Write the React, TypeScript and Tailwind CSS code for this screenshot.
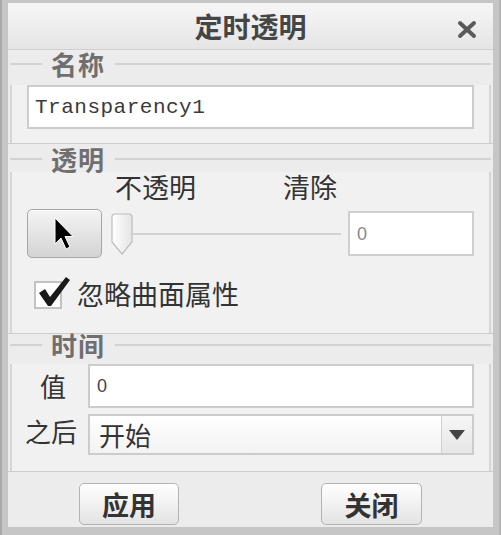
import type { ReactNode } from "react";

const cjk = "font-['Noto_Sans_CJK_SC','Noto_Sans',sans-serif]";

function Legend({ title }: { title: string }) {
  return (
    <div className="flex h-[22px] items-center">
      <div className="h-[2px] w-[32px] bg-[#d3d3d3]" />
      <span className={`${cjk} pl-[9px] pr-[10px] text-[26px] font-bold leading-none tracking-[1px] text-[#6f6f6f]`}>
        {title}
      </span>
      <div className="h-[2px] flex-1 bg-[#d3d3d3]" />
    </div>
  );
}

function Section({ title, top, bottom, children }: { title: string; top: string; bottom: string; children: ReactNode }) {
  return (
    <div className={`border-b border-[#cdcdcd] bg-[#ececec] px-[2px] ${top}`}>
      <Legend title={title} />
      <div className={`border-x-2 border-[#d6d6d6] bg-[#f1f1f1] px-[15px] ${bottom}`}>{children}</div>
    </div>
  );
}

function CursorIcon() {
  return (
    <svg width="24" height="34" viewBox="0 0 24 34">
      <path d="M2 1 L2 27 L8 21 L13 32 L17 30 L12 19.5 L20 19.5 Z" fill="#000" stroke="#fff" strokeWidth="1" />
    </svg>
  );
}

function SliderThumb() {
  return (
    <svg width="22" height="42" viewBox="0 0 22 42">
      <defs>
        <linearGradient id="thumb" x1="0" y1="0" x2="1" y2="0">
          <stop offset="0" stopColor="#ffffff" />
          <stop offset="1" stopColor="#e4e4e4" />
        </linearGradient>
      </defs>
      <path d="M4 1 H18 Q21 1 21 4 V29 L11 41 L1 29 V4 Q1 1 4 1 Z" fill="url(#thumb)" stroke="#bdbdbd" strokeWidth="1.2" />
    </svg>
  );
}

export default function App() {
  return (
    <div className="h-[535px] w-[501px] bg-[#c6c6c6] pb-2 pl-2 pr-2 pt-[3px] shadow-[inset_2px_0_0_#a9a9a9,inset_-2px_0_0_#b4b4b4]">
      <div className="flex h-full flex-col bg-[#e9e9e9]">
        <div className="relative flex h-[47px] items-center justify-center border-b border-[#cfcfcf] bg-gradient-to-b from-[#f6f6f6] to-[#e5e5e5]">
          <span className={`${cjk} text-[28px] font-bold leading-none text-[#454545]`}>定时透明</span>
          <svg className="absolute right-[16px] top-[17px]" width="20" height="19" viewBox="0 0 20 19">
            <path d="M3 3 L17 16 M17 3 L3 16" stroke="#5a5a5a" strokeWidth="4" strokeLinecap="round" />
          </svg>
        </div>

        <Section title="名称" top="pt-[3px]" bottom="pb-[14px]">
          <div className="mt-[10px] flex h-[44px] items-center border-2 border-[#cccccc] bg-white px-[6px]">
            <span className="font-['Liberation_Mono',monospace] text-[21px] leading-none tracking-[0.5px] text-[#3a3a3a]">
              Transparency1
            </span>
          </div>
        </Section>

        <Section title="透明" top="pt-[4px]" bottom="pb-[24px]">
          <div className={`${cjk} mt-[2px] flex h-[28px] items-center text-[27px] leading-none text-[#333]`}>
            <span className="ml-[88px]">不透明</span>
            <span className="ml-[87px]">清除</span>
          </div>
          <div className="mt-[9px] flex h-[49px] items-center">
            <button className="flex h-[49px] w-[75px] items-center justify-center rounded-[5px] border border-[#a6a6a6] bg-gradient-to-b from-[#f4f4f4] to-[#d4d4d4] shadow-[inset_0_1px_0_#ffffff]">
              <CursorIcon />
            </button>
            <div className="ml-[9px] flex h-[49px] w-[230px] items-center">
              <SliderThumb />
              <div className="h-[2px] flex-1 bg-[#d2d2d2]" />
            </div>
            <div className="ml-[7px] flex h-[45px] flex-1 items-center border-2 border-[#cfcfcf] bg-white px-[7px]">
              <span className="font-['Liberation_Sans',sans-serif] text-[18px] leading-none text-[#888]">0</span>
            </div>
          </div>
          <div className="mt-[19px] flex h-[32px] items-end">
            <div className="relative ml-[7px] h-[28px] w-[28px] border-2 border-[#c3c3c3] bg-white">
              <svg className="absolute -top-[8px] left-[0px]" width="36" height="34" viewBox="0 0 36 34">
                <path d="M3 18 L9 14 L14 22 L30 2 L34 5 L15 31 L12 31 Z" fill="#1a1a1a" />
              </svg>
            </div>
            <span className={`${cjk} ml-[15px] text-[27px] leading-[30px] text-[#333]`}>忽略曲面属性</span>
          </div>
        </Section>

        <Section title="时间" top="pt-0" bottom="pb-[16px]">
          <div className="mt-[8px] flex h-[44px] items-center">
            <span className={`${cjk} w-[61px] pl-[13px] text-[26px] leading-none text-[#333]`}>值</span>
            <div className="flex h-[44px] flex-1 items-center border-2 border-[#cccccc] bg-white px-[7px]">
              <span className="font-['Liberation_Sans',sans-serif] text-[18px] leading-none text-[#444]">0</span>
            </div>
          </div>
          <div className="mt-[6px] flex h-[41px] items-center">
            <span className={`${cjk} -ml-[2px] mb-[8px] w-[63px] text-[26px] leading-none text-[#333]`}>之后</span>
            <div className="flex h-[41px] flex-1 border-2 border-[#cccccc] bg-gradient-to-b from-white to-[#f3f3f3]">
              <span className={`${cjk} flex flex-1 items-center pl-[9px] text-[26px] leading-none text-[#333]`}>开始</span>
              <div className="flex w-[31px] items-center justify-center border-l border-[#cfcfcf] bg-gradient-to-b from-[#f6f6f6] to-[#e6e6e6]">
                <svg width="16" height="10" viewBox="0 0 16 10">
                  <path d="M0 0 H16 L8 10 Z" fill="#444" />
                </svg>
              </div>
            </div>
          </div>
        </Section>

        <div className="flex flex-1 items-start justify-around bg-[#ececec] pt-[11px]">
          <button className={`${cjk} flex h-[42px] w-[100px] items-center justify-center rounded-[5px] border border-[#b3b3b3] bg-gradient-to-b from-white to-[#e3e3e3] text-[27px] font-bold leading-none text-[#333]`}>
            应用
          </button>
          <button className={`${cjk} flex h-[42px] w-[101px] items-center justify-center rounded-[5px] border border-[#b3b3b3] bg-gradient-to-b from-white to-[#e3e3e3] text-[27px] font-bold leading-none text-[#333]`}>
            关闭
          </button>
        </div>
      </div>
    </div>
  );
}
